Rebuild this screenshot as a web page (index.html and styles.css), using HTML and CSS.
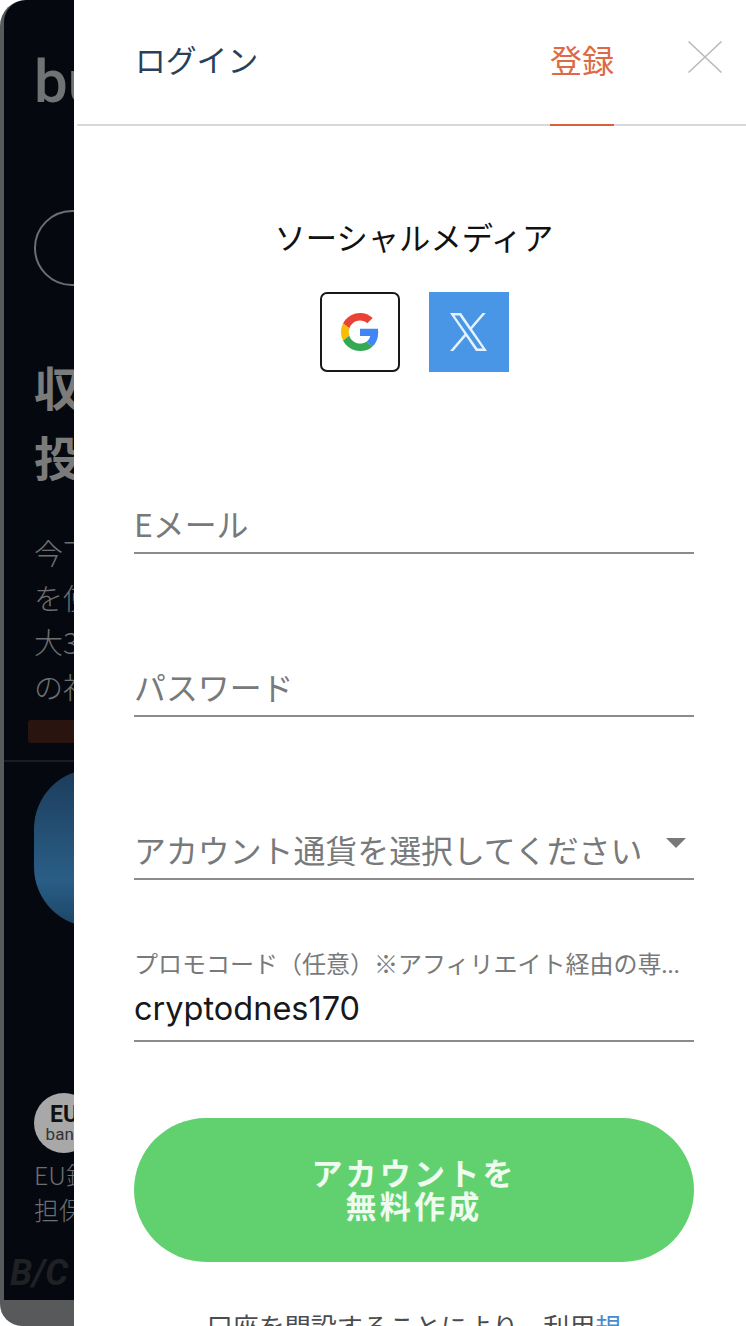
FILE: index.html
```html
<!DOCTYPE html>
<html lang="ja">
<head>
<meta charset="utf-8">
<title>登録</title>
<link rel="stylesheet" href="styles.css">
</head>
<body>
<div class="app">
  <aside class="backdrop">
    <div class="page">
      <div class="logo">bu</div>
      <div class="ring"></div>
      <h1 class="hero">収益<br>投資</h1>
      <p class="lead">今下<br>を使<br>大3<br>の社</p>
      <div class="cta"></div>
      <div class="rule"></div>
      <div class="card"></div>
      <div class="badge"><b>EU</b><span>bank</span></div>
      <p class="note">EU銀行<br>担保付き</p>
      <div class="fade">B/C</div>
    </div>
  </aside>
  <main class="drawer">
    <header class="tabs">
      <a class="tab">ログイン</a>
      <a class="tab tab-active">登録</a>
      <svg class="close" viewBox="0 0 34 32" aria-hidden="true"><path d="M.5.5l33 31M33.5.5l-33 31"/></svg>
    </header>
    <section class="form">
      <h2 class="social-title">ソーシャルメディア</h2>
      <div class="social">
        <a class="social-btn social-google">
          <svg class="g-icon" viewBox="0 0 48 48" aria-hidden="true">
            <path fill="#EA4335" d="M24 9.5c3.54 0 6.71 1.22 9.21 3.6l6.85-6.85C35.9 2.38 30.47 0 24 0 14.62 0 6.51 5.38 2.56 13.22l7.98 6.19C12.43 13.72 17.74 9.5 24 9.5z"/>
            <path fill="#4285F4" d="M46.98 24.55c0-1.57-.15-3.09-.38-4.55H24v9.02h12.94c-.58 2.96-2.26 5.48-4.78 7.18l7.73 6c4.51-4.18 7.09-10.36 7.09-17.65z"/>
            <path fill="#FBBC05" d="M10.53 28.59c-.48-1.45-.76-2.99-.76-4.59s.27-3.14.76-4.59l-7.98-6.19C.92 16.46 0 20.12 0 24c0 3.88.92 7.54 2.56 10.78l7.97-6.19z"/>
            <path fill="#34A853" d="M24 48c6.48 0 11.93-2.13 15.89-5.81l-7.73-6c-2.15 1.45-4.92 2.3-8.16 2.3-6.26 0-11.57-4.22-13.47-9.91l-7.98 6.19C6.51 42.62 14.62 48 24 48z"/>
          </svg>
        </a>
        <a class="social-btn social-x">
          <svg class="x-icon" viewBox="0 0 1200 1227" aria-hidden="true">
            <path fill="#e4f3ff" d="M714.163 519.284L1160.89 0H1055.03L667.137 450.887L357.328 0H0L468.492 681.821L0 1226.37H105.866L515.491 750.218L842.672 1226.37H1200L714.137 519.284H714.163ZM569.165 687.828L521.697 619.934L144.011 79.6944H306.615L611.412 515.685L658.88 583.579L1055.08 1150.3H892.476L569.165 687.854V687.828Z"/>
          </svg>
        </a>
      </div>
      <div class="field field-email"><span class="placeholder">Eメール</span></div>
      <div class="field"><span class="placeholder">パスワード</span></div>
      <div class="field field-select">
        <span class="placeholder">アカウント通貨を選択してください</span>
        <span class="caret"></span>
      </div>
      <div class="field field-promo">
        <span class="small-label">プロモコード（任意）※アフィリエイト経由の専用コードを入力</span>
        <span class="value">cryptodnes170</span>
      </div>
      <button class="submit" type="button">アカウントを<br>無料作成</button>
      <p class="terms">口座を開設することにより、利用<a class="terms-link">規</a></p>
    </section>
  </main>
</div>
</body>
</html>
```
FILE: styles.css
```css
* { box-sizing: border-box; }
html, body {
  margin: 0;
  background: #fff;
}
body {
  height: 1326px;
  overflow: hidden;
  font-family: "Noto Sans CJK JP", "Noto Sans", sans-serif;
}
.app {
  display: flex;
  height: 1326px;
  overflow: hidden;
}

/* dimmed page behind the drawer */
.backdrop {
  flex: 0 0 74px;
  height: 1326px;
  overflow: hidden;
  padding-left: 4px;
  background: #58595b;
  border-radius: 26px 0 0 22px;
}
.page {
  width: 700px;
  height: 1300px;
  padding: 52px 0 0 30px;
  overflow: hidden;
  background: #05090f;
  border-radius: 22px 0 0 0;
  color: #76787a;
}
.logo {
  height: 60px;
  font: 500 60px/60px "Roboto", sans-serif;
  color: #717274;
}
.ring {
  width: 76px;
  height: 76px;
  margin-top: 98px;
  border: 2px solid #6c6e70;
  border-radius: 50%;
}
.hero {
  margin: 65px 0 0;
  font-size: 47px;
  line-height: 70px;
  font-weight: 700;
  color: #7b7b7b;
}
.lead {
  margin: 39px 0 0;
  font-size: 29px;
  line-height: 44.5px;
  font-weight: 300;
  color: #6d6f72;
}
.cta {
  width: 300px;
  height: 23px;
  margin: 12px 0 0 -6px;
  border-radius: 3px;
  background: #2a1410;
}
.rule {
  height: 2px;
  margin: 17px 0 0 -30px;
  background: #1a1e22;
}
.card {
  width: 400px;
  height: 158px;
  margin-top: 7px;
  border-radius: 60px;
  background: linear-gradient(180deg, #1c3c5b 0%, #2a5e86 70%, #1c4567 100%);
}
.badge {
  display: flex;
  flex-direction: column;
  align-items: center;
  width: 60px;
  height: 60px;
  margin-top: 166px;
  padding-top: 11px;
  border-radius: 50%;
  background: #a8a8a8;
  color: #111;
}
.badge b {
  font: 700 23px/22px "Roboto", sans-serif;
}
.badge span {
  font: 400 17px/16px "Roboto", sans-serif;
  color: #333;
}
.note {
  margin: 4px 0 0;
  font-size: 25px;
  line-height: 35px;
  font-weight: 300;
  color: #6d6f72;
}
.fade {
  margin: 28px 0 0 -24px;
  font: italic 700 36px/36px "Roboto", sans-serif;
  color: #1f2124;
}

/* drawer */
.drawer {
  flex: 1 1 auto;
  min-width: 0;
  background: #fff;
}
.tabs {
  display: flex;
  align-items: flex-start;
  height: 126px;
  margin-left: 3px;
  padding: 0 24px 0 58px;
  border-bottom: 2px solid #d9d9d9;
}
.tab {
  height: 126px;
  padding-top: 36px;
  font-size: 30.8px;
  line-height: 46px;
  color: #2a3f5a;
}
.tab-active {
  margin-left: auto;
  border-bottom: 2px solid #d9603b;
  font-size: 32px;
  color: #de6a45;
}
.close {
  flex: none;
  width: 34px;
  height: 32px;
  margin: 41px 0 0 74px;
}
.close path {
  fill: none;
  stroke: #b9b9b9;
  stroke-width: 1.5;
}
.form {
  padding: 88px 52px 0 60px;
}
.social-title {
  margin: 0;
  font-size: 31.3px;
  line-height: 46px;
  font-weight: 400;
  text-align: center;
  color: #111;
}
.social {
  display: flex;
  justify-content: center;
  gap: 29px;
  margin-top: 32px;
}
.social-btn {
  display: flex;
  align-items: center;
  justify-content: center;
  width: 80px;
  height: 80px;
}
.social-google {
  border: 2px solid #16181a;
  border-radius: 7px;
}
.social-x {
  background: #4a96e6;
}
.g-icon {
  width: 38px;
  height: 38px;
}
.x-icon {
  width: 37px;
  height: 38px;
}
.field {
  display: flex;
  align-items: flex-end;
  justify-content: space-between;
  height: 80px;
  margin-top: 83px;
  padding-bottom: 6px;
  border-bottom: 2px solid #8b8b8b;
}
.field-email {
  margin-top: 102px;
}
.placeholder {
  font-size: 31.9px;
  line-height: 46px;
  color: #77797b;
  white-space: nowrap;
}
.caret {
  flex: none;
  width: 0;
  height: 0;
  margin: 0 8px 24px 0;
  border-style: solid;
  border-width: 10px 10px 0;
  border-color: #77797b transparent transparent;
}
.field-promo {
  display: block;
  height: 100px;
  margin-top: 62px;
  padding: 0;
}
.small-label {
  display: block;
  width: 546px;
  padding-top: 2px;
  overflow: hidden;
  font-family: "Lato", "Noto Sans CJK JP", sans-serif;
  font-size: 24px;
  line-height: 40px;
  color: #77797b;
  white-space: nowrap;
  text-overflow: ellipsis;
}
.value {
  display: block;
  margin-top: 4px;
  font: 400 32.5px/42px "Inter", sans-serif;
  color: #16181b;
}
.submit {
  display: block;
  width: 560px;
  height: 144px;
  margin-top: 76px;
  padding: 0 0 5px;
  border: 0;
  border-radius: 72px;
  background: #61d16f;
  font-family: inherit;
  font-size: 31px;
  line-height: 33px;
  font-weight: 700;
  letter-spacing: 3.2px;
  color: #effbef;
}
.terms {
  margin: 44px 0 0;
  font-size: 26px;
  line-height: 40px;
  text-align: center;
  white-space: nowrap;
  color: #4a4c4f;
}
.terms-link {
  color: #4a8cc9;
}
```
